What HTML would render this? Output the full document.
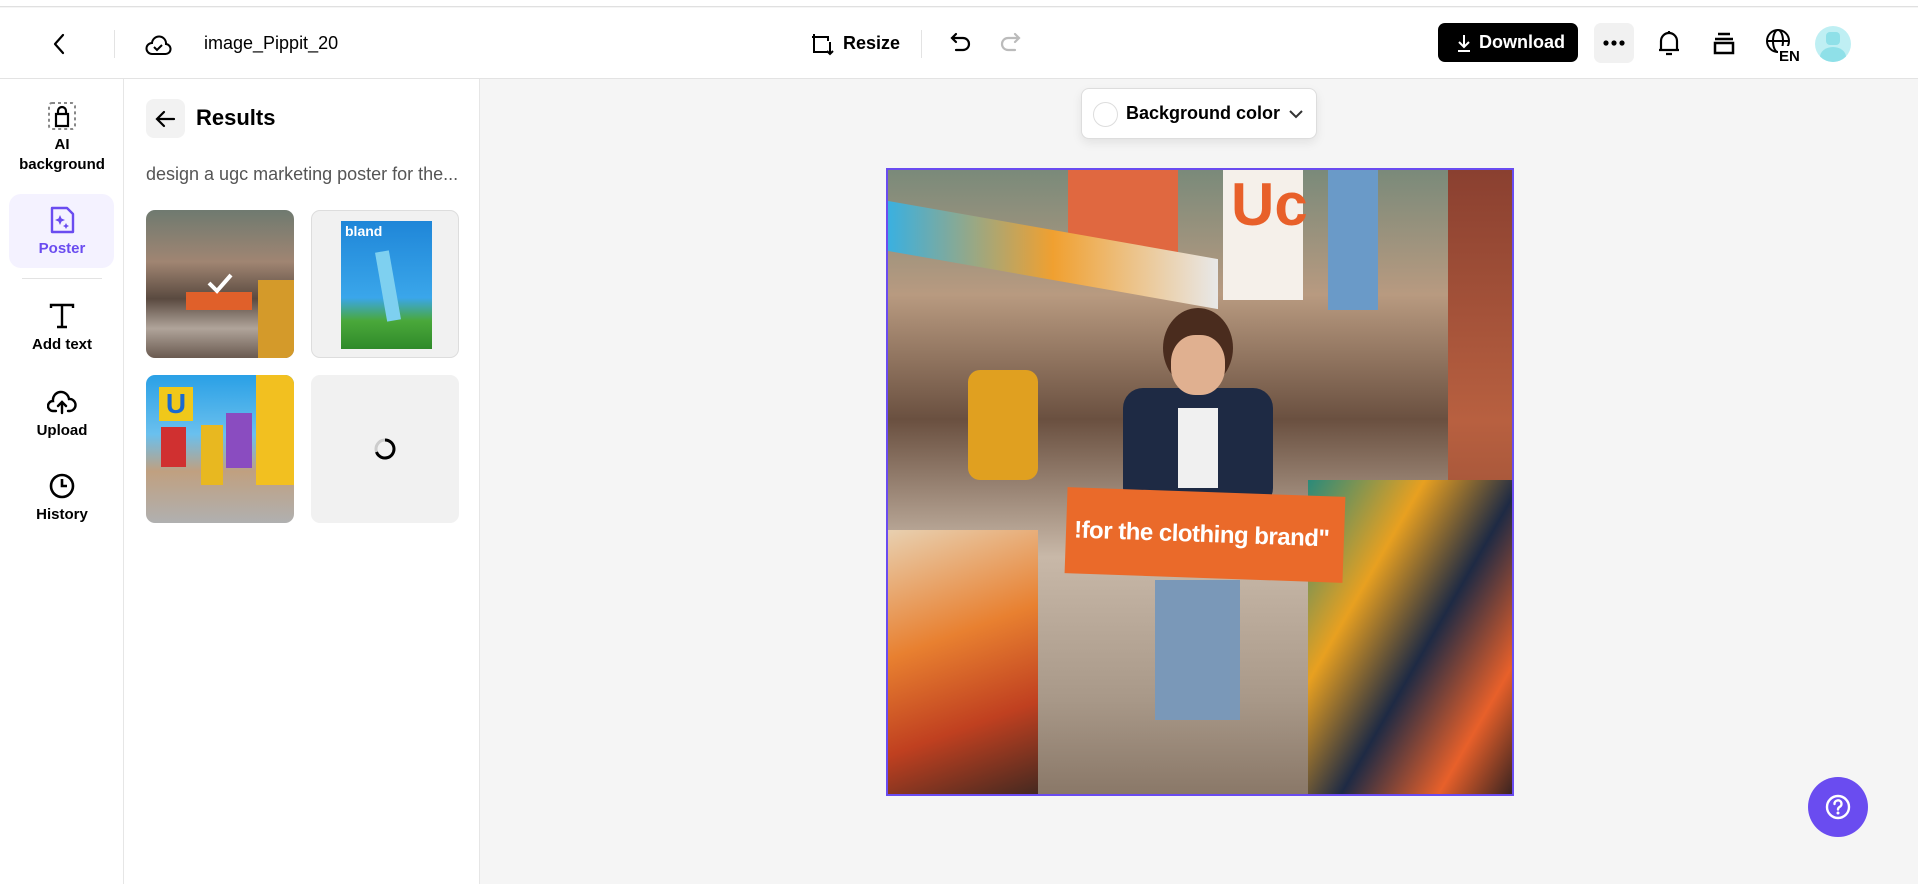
<!DOCTYPE html>
<html><head><meta charset="utf-8"><style>
*{box-sizing:border-box;margin:0;padding:0}
body{width:1918px;height:884px;overflow:hidden;background:#f5f5f5;font-family:"Liberation Sans",sans-serif;color:#000;position:relative}
.abs{position:absolute}
#top{left:0;top:0;width:1918px;height:7px;background:#fff;border-bottom:1px solid #e0e0e0}
#hdr{left:0;top:8px;width:1918px;height:71px;background:#fff;border-bottom:1px solid #e3e3e3}
#rail{left:0;top:79px;width:124px;height:805px;background:#fff;border-right:1px solid #e6e6e6}
#panel{left:124px;top:79px;width:356px;height:805px;background:#fff;border-right:1px solid #e6e6e6}
.ri{position:absolute;left:0;width:124px;text-align:center;font-size:15px;font-weight:bold;line-height:20px}
.ri svg{display:block;margin:0 auto 4px}
.th{position:absolute;width:148px;height:148px;border-radius:9px;overflow:hidden}
</style></head><body>
<div id="top" class="abs"></div>
<div id="hdr" class="abs">
 <svg class="abs" style="left:49px;top:24px" width="20" height="24" viewBox="0 0 20 24"><path d="M14 3 L6 12 L14 21" fill="none" stroke="#000" stroke-width="2.2" stroke-linecap="round" stroke-linejoin="round"/></svg>
 <div class="abs" style="left:114px;top:22px;width:1px;height:28px;background:#e3e3e3"></div>
 <svg class="abs" style="left:143px;top:20px" width="30" height="32" viewBox="0 0 30 32"><path d="M9 26 H22 a5 5 0 0 0 1-10 a7 7 0 0 0-14-1 a5 5 0 0 0 0 11z" fill="none" stroke="#000" stroke-width="2"/><path d="M11 19 l3 3 l5-5" fill="none" stroke="#000" stroke-width="2"/></svg>
 <div class="abs" style="left:204px;top:25px;font-size:18px">image_Pippit_20</div>
 <svg class="abs" style="left:808px;top:22px" width="28" height="28" viewBox="0 0 28 28"><path d="M6 4 v18 h14 M4 7 h16 v4 M22 12 v12 M19 21 l3 3 l3-3" fill="none" stroke="#000" stroke-width="2"/></svg>
 <div class="abs" style="left:843px;top:25px;font-size:18px;font-weight:bold">Resize</div>
 <div class="abs" style="left:921px;top:22px;width:1px;height:28px;background:#e3e3e3"></div>
 <svg class="abs" style="left:948px;top:22px" width="26" height="26" viewBox="0 0 26 26"><path d="M8 4 L4 8 L8 12 M4 8 H15 a6 6 0 0 1 0 12 H8" fill="none" stroke="#000" stroke-width="2.2" stroke-linecap="round"/></svg>
 <svg class="abs" style="left:997px;top:22px" width="26" height="26" viewBox="0 0 26 26"><path d="M18 4 L22 8 L18 12 M22 8 H11 a6 6 0 0 0 0 12 H18" fill="none" stroke="#bbb" stroke-width="2.2" stroke-linecap="round"/></svg>
 <div class="abs" style="left:1438px;top:15px;width:140px;height:39px;background:#000;border-radius:7px;color:#fff;font-weight:bold;font-size:18px;line-height:39px;padding-left:41px">Download</div>
 <svg class="abs" style="left:1455px;top:25px" width="18" height="20" viewBox="0 0 18 20"><path d="M9 2 v12 M4 9 l5 5 l5-5 M3 18 h12" fill="none" stroke="#fff" stroke-width="2"/></svg>
 <div class="abs" style="left:1594px;top:15px;width:40px;height:40px;background:#f1f1f1;border-radius:7px"></div>
 <svg class="abs" style="left:1602px;top:31px" width="24" height="8" viewBox="0 0 24 8"><circle cx="4" cy="4" r="2.6"/><circle cx="12" cy="4" r="2.6"/><circle cx="20" cy="4" r="2.6"/></svg>
 <svg class="abs" style="left:1655px;top:20px" width="28" height="30" viewBox="0 0 28 30"><path d="M6 22 V13 a8 8 0 0 1 16 0 V22 M4 22 H24 M11 26 h6 M14 3 v2" fill="none" stroke="#000" stroke-width="2.2"/></svg>
 <svg class="abs" style="left:1710px;top:20px" width="28" height="30" viewBox="0 0 28 30"><path d="M8 6 h12 M5 11 h18 M5 15 h18 v10 H5 z" fill="none" stroke="#000" stroke-width="2.5"/></svg>
 <svg class="abs" style="left:1764px;top:19px" width="40" height="36" viewBox="0 0 40 36"><circle cx="14" cy="14" r="11" fill="none" stroke="#000" stroke-width="2"/><ellipse cx="14" cy="14" rx="5" ry="11" fill="none" stroke="#000" stroke-width="2"/><path d="M3 14 h22" stroke="#000" stroke-width="2"/><rect x="14" y="19" width="22" height="16" fill="#fff"/><text x="15" y="34" font-family="Liberation Sans" font-weight="bold" font-size="15" fill="#000">EN</text></svg>
 <div class="abs" style="left:1815px;top:18px;width:36px;height:36px;border-radius:50%;background:#bfeff3;overflow:hidden"><div style="position:absolute;left:11px;top:6px;width:14px;height:13px;border-radius:4px;background:#8fe0e8"></div><div style="position:absolute;left:5px;top:21px;width:26px;height:20px;border-radius:50%;background:#8fe0e8"></div></div>
</div>

<div id="rail" class="abs">
 <div class="ri" style="top:22px"><svg width="30" height="30" viewBox="0 0 30 30"><rect x="2" y="2" width="26" height="26" rx="3" fill="none" stroke="#888" stroke-width="2" stroke-dasharray="3 3"/><path d="M9 25 V13 H21 V25 Z M11 13 V10 a4 4 0 0 1 8 0 V13" fill="none" stroke="#000" stroke-width="2.2"/></svg>AI<br>background</div>
 <div class="abs" style="left:9px;top:115px;width:105px;height:74px;border-radius:12px;background:#f4f2ff"></div>
 <div class="ri" style="top:126px;color:#6a4cf0"><svg width="28" height="30" viewBox="0 0 28 30"><path d="M4 3 H19 L25 9 V27 H4 Z" fill="none" stroke="#6a4cf0" stroke-width="2.4" stroke-linejoin="round"/><path d="M12 10 l1.5 3.5 l3.5 1.5 l-3.5 1.5 l-1.5 3.5 l-1.5-3.5 l-3.5-1.5 l3.5-1.5z M18 18 l1 2 l2 1 l-2 1 l-1 2 l-1-2 l-2-1 l2-1z" fill="#6a4cf0"/></svg>Poster</div>
 <div class="abs" style="left:22px;top:199px;width:80px;height:1px;background:#e3e3e3"></div>
 <div class="ri" style="top:222px"><svg width="30" height="30" viewBox="0 0 30 30"><path d="M4 7 V4 H26 V7 M15 4 V26 M10 26 H20" fill="none" stroke="#000" stroke-width="2.4"/></svg>Add text</div>
 <div class="ri" style="top:308px"><svg width="30" height="30" viewBox="0 0 30 30"><path d="M9 24 H6 a5 5 0 0 1 0-10 a8 8 0 0 1 16-2 a6 6 0 0 1 1 12 H21 M15 26 V15 M11 19 l4-4 l4 4" fill="none" stroke="#000" stroke-width="2.4" stroke-linecap="round"/></svg>Upload</div>
 <div class="ri" style="top:392px"><svg width="30" height="30" viewBox="0 0 30 30"><circle cx="15" cy="15" r="11" fill="none" stroke="#000" stroke-width="2.6"/><path d="M15 8 V15 H20" fill="none" stroke="#000" stroke-width="2.6"/></svg>History</div>
</div>

<div id="panel" class="abs">
 <div class="abs" style="left:22px;top:20px;width:39px;height:39px;border-radius:8px;background:#f2f2f2"></div>
 <svg class="abs" style="left:29px;top:27px" width="26" height="26" viewBox="0 0 26 26"><path d="M21 13 H5 M11 6 L4 13 L11 20" fill="none" stroke="#000" stroke-width="2.2" stroke-linecap="round"/></svg>
 <div class="abs" style="left:72px;top:26px;font-size:22px;font-weight:bold">Results</div>
 <div class="abs" style="left:22px;top:85px;font-size:18px;color:#555;white-space:nowrap">design a ugc marketing poster for the...</div>
 <div class="th" style="left:22px;top:131px;background:linear-gradient(180deg,#6f7a70 0%,#a08572 35%,#5a4a40 60%,#b0a49a 80%,#6a5a50 100%)">
  <div class="abs" style="left:40px;top:82px;width:66px;height:18px;background:#e0602a"></div>
  <div class="abs" style="left:112px;top:70px;width:36px;height:78px;background:#d49a2a"></div>
  <svg class="abs" style="left:60px;top:62px" width="28" height="22" viewBox="0 0 28 22"><path d="M3 11 l8 8 l14-16" fill="none" stroke="#fff" stroke-width="4"/></svg>
 </div>
 <div class="th" style="left:187px;top:131px;background:#f1f1f1;border:1px solid #ddd">
  <div class="abs" style="left:29px;top:10px;width:91px;height:128px;background:linear-gradient(180deg,#1f86d8 0%,#3aa6ea 60%,#4aa83a 78%,#2f8a2a 100%)"><div style="color:#fff;font-weight:bold;font-size:14px;padding:2px 4px">bland</div><div style="position:absolute;left:40px;top:30px;width:14px;height:70px;background:#7ed0f0;transform:rotate(-10deg)"></div></div>
 </div>
 <div class="th" style="left:22px;top:296px;background:linear-gradient(180deg,#2aa0e6 0%,#6ac0ee 40%,#c0a080 65%,#b0b0b0 100%)">
  <div class="abs" style="left:13px;top:12px;width:34px;height:34px;background:#f0c81a;color:#1a6ad0;font-weight:bold;font-size:28px;text-align:center;line-height:34px">U</div>
  <div class="abs" style="left:110px;top:0;width:38px;height:110px;background:#f2c020"></div>
  <div class="abs" style="left:80px;top:38px;width:26px;height:55px;background:#8a4cc0"></div>
  <div class="abs" style="left:15px;top:52px;width:25px;height:40px;background:#d03030"></div>
  <div class="abs" style="left:55px;top:50px;width:22px;height:60px;background:#e8b820"></div>
 </div>
 <div class="th" style="left:187px;top:296px;background:#f1f1f1">
  <svg class="abs" style="left:62px;top:62px" width="24" height="24" viewBox="0 0 24 24"><circle cx="12" cy="12" r="9" fill="none" stroke="#ccc" stroke-width="3"/><path d="M12 3 A9 9 0 1 1 3.5 15" fill="none" stroke="#000" stroke-width="3"/></svg>
 </div>
</div>

<div class="abs" style="left:1081px;top:88px;width:236px;height:51px;background:#fff;border:1px solid #ddd;border-radius:8px;box-shadow:0 4px 10px rgba(0,0,0,.08)">
 <div class="abs" style="left:11px;top:13px;width:25px;height:25px;border-radius:50%;border:1px solid #ddd"></div>
 <div class="abs" style="left:44px;top:14px;font-size:18px;font-weight:bold">Background color</div>
 <svg class="abs" style="left:206px;top:18px" width="16" height="14" viewBox="0 0 16 14"><path d="M2 4 l6 6 l6-6" fill="none" stroke="#333" stroke-width="2"/></svg>
</div>

<div class="abs" style="left:886px;top:168px;width:628px;height:628px;border:2px solid #6a4cf0;overflow:hidden;background:linear-gradient(180deg,#7a8a7a 0%,#b89a80 20%,#6a5040 40%,#c8b8a8 62%,#a89888 85%,#8a7868 100%)">
 <div class="abs" style="left:180px;top:0;width:110px;height:110px;background:#e06840"></div>
 <div class="abs" style="left:335px;top:0;width:80px;height:130px;background:#f5f0ea"><div style="color:#e8602a;font-size:60px;font-weight:bold;padding-left:8px">Uc</div></div>
 <div class="abs" style="left:440px;top:0;width:50px;height:140px;background:#6a9ac8"></div>
 <div class="abs" style="left:560px;top:0;width:66px;height:628px;background:linear-gradient(180deg,#8a4030,#b86040 40%,#603020)"></div>
 <div class="abs" style="left:0;top:60px;width:330px;height:50px;background:linear-gradient(90deg,#3ab0e0,#f0a030,#e8e8e8);transform:skewY(10deg)"></div>
 <div class="abs" style="left:80px;top:200px;width:70px;height:110px;background:#e0a020;border-radius:12px"></div>
 <div class="abs" style="left:235px;top:218px;width:150px;height:120px;background:#1e2a44;border-radius:20px"></div>
 <div class="abs" style="left:290px;top:238px;width:40px;height:80px;background:#f0f0f0"></div>
 <div class="abs" style="left:275px;top:138px;width:70px;height:80px;background:#4a2c1e;border-radius:50%"></div>
 <div class="abs" style="left:283px;top:165px;width:54px;height:60px;background:#e0b090;border-radius:45%"></div>
 <div class="abs" style="left:267px;top:410px;width:85px;height:140px;background:#7a98b8"></div>
 <div class="abs" style="left:420px;top:310px;width:206px;height:318px;background:linear-gradient(120deg,#2a8a7a,#e8a020 30%,#1e2a44 55%,#e8602a 80%,#302020)"></div>
 <div class="abs" style="left:178px;top:322px;width:278px;height:86px;background:#ea6a2a;transform:rotate(2deg);color:#fff;font-weight:bold;font-size:24px;letter-spacing:-0.5px;line-height:86px;padding-left:8px;white-space:nowrap;overflow:hidden">!for the clothing brand"</div>
 <div class="abs" style="left:0;top:360px;width:150px;height:268px;background:linear-gradient(160deg,#e8d0b0,#e88030 40%,#c04020 70%,#402820)"></div>
</div>

<div class="abs" style="left:1808px;top:777px;width:60px;height:60px;border-radius:50%;background:#6a4cf0"></div>
<svg class="abs" style="left:1823px;top:792px" width="30" height="30" viewBox="0 0 30 30"><circle cx="15" cy="15" r="11" fill="none" stroke="#fff" stroke-width="2.4"/><path d="M11.5 12 a3.5 3.5 0 1 1 5 3 c-1 .6-1.5 1.2-1.5 2.5" fill="none" stroke="#fff" stroke-width="2.4" stroke-linecap="round"/><circle cx="15" cy="21" r="1.5" fill="#fff"/></svg>
</body></html>
